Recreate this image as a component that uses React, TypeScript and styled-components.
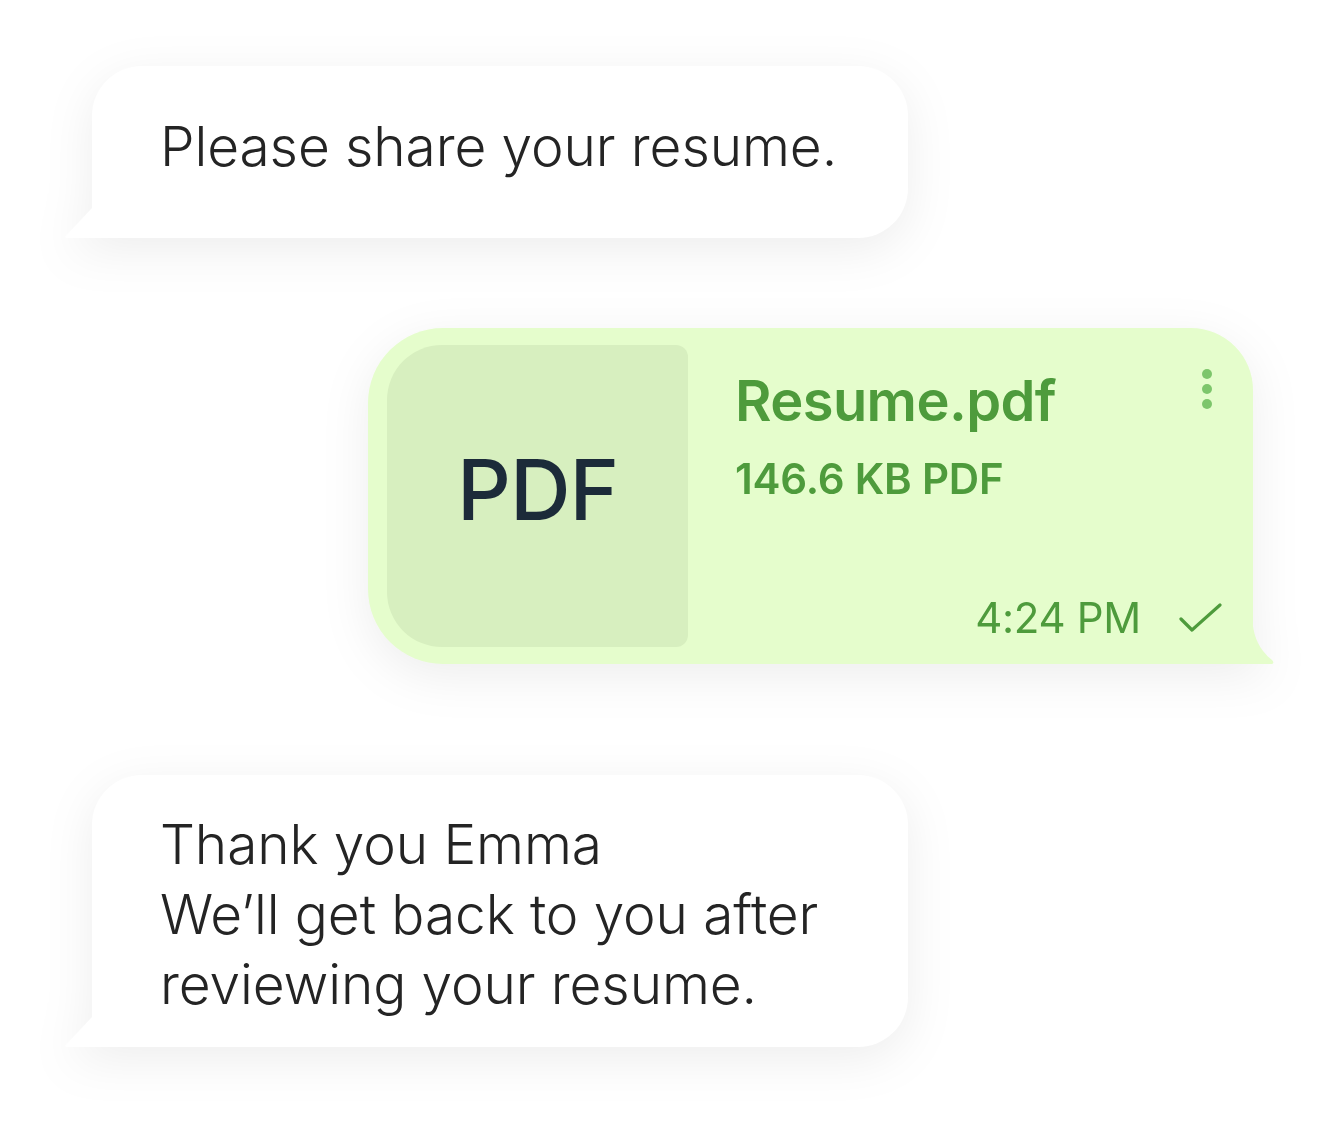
import React from "react";
import styled, { createGlobalStyle } from "styled-components";

const GlobalStyle = createGlobalStyle`
  html, body {
    margin: 0;
    padding: 0;
    background: #ffffff;
  }
  body {
    font-family: Inter, "Noto Sans", sans-serif;
  }
`;

const Page = styled.div`
  width: 1341px;
  height: 1134px;
  box-sizing: border-box;
  padding: 66px 88px 0 92px;
  display: flex;
  flex-direction: column;
`;

const Bubble = styled.div<{ $height: number; $nudge: number }>`
  position: relative;
  box-sizing: border-box;
  width: 816px;
  height: ${(p) => p.$height}px;
  padding: ${(p) => (p.$nudge > 0 ? `${p.$nudge}px 30px 0 68px` : `0 30px ${-p.$nudge}px 68px`)};
  display: flex;
  align-items: center;
  background: #ffffff;
  border-radius: 50px 50px 50px 0;
  filter: drop-shadow(0 12px 24px rgba(0, 0, 0, 0.07));

  &::before {
    content: "";
    position: absolute;
    left: -27px;
    bottom: 0;
    width: 28px;
    height: 31px;
    background: #ffffff;
    clip-path: polygon(100% 0, 100% 100%, 2px 100%, 0 97%);
  }
`;

const MessageText = styled.p`
  margin: 0;
  font-size: 55px;
  font-weight: 300;
  line-height: 70px;
  color: #242424;
  letter-spacing: -0.1px;
`;

const SentBubble = styled.div`
  position: relative;
  align-self: flex-end;
  margin: 90px 0 111px;
  box-sizing: border-box;
  width: 885px;
  height: 336px;
  padding: 17px 0 17px 19px;
  display: flex;
  background: #e5fdcc;
  border-radius: 75px 62px 0 75px;
  filter: drop-shadow(0 12px 24px rgba(0, 0, 0, 0.07));

  &::after {
    content: "";
    position: absolute;
    right: -21px;
    bottom: 0;
    width: 22px;
    height: 48px;
    background: #e5fdcc;
    clip-path: path("M0 0 C 1 22, 8 34, 20 44 C 22 46, 22 48, 19 48 L 0 48 Z");
  }
`;

const FileThumb = styled.div`
  width: 301px;
  height: 302px;
  flex-shrink: 0;
  display: flex;
  align-items: center;
  justify-content: center;
  padding-bottom: 14px;
  box-sizing: border-box;
  background: #d7efbf;
  border-radius: 55px 12px 12px 55px;
  font-size: 84px;
  font-weight: 500;
  color: #1c2b39;
  letter-spacing: -1px;
`;

const FileInfo = styled.div`
  flex: 1;
  position: relative;
  display: flex;
  flex-direction: column;
  padding: 21px 0 0 47px;
  color: #4e9b3c;
`;

const FileName = styled.div`
  font-size: 56px;
  font-weight: 600;
  line-height: 70px;
  letter-spacing: -0.6px;
`;

const FileMeta = styled.div`
  margin-top: 17px;
  font-size: 42px;
  font-weight: 600;
  line-height: 52px;
  letter-spacing: -0.2px;
`;

const Footer = styled.div`
  margin-top: auto;
  margin-bottom: 4px;
  padding-right: 30px;
  display: flex;
  align-items: center;
  justify-content: flex-end;
  gap: 38px;
`;

const Time = styled.span`
  font-size: 42px;
  font-weight: 400;
  line-height: 50px;
  letter-spacing: -0.3px;
`;

const MenuDots = styled.div`
  position: absolute;
  top: 24px;
  right: 41px;
  display: flex;
  flex-direction: column;
  gap: 5px;

  span {
    width: 10px;
    height: 10px;
    border-radius: 50%;
    background: #7dc66b;
  }
`;

const CheckIcon = () => (
  <svg width="44" height="32" viewBox="0 0 44 32" fill="none">
    <path
      d="M2 17 L13 28 L41 3"
      stroke="#4e9b3c"
      strokeWidth="3.2"
      strokeLinecap="round"
      strokeLinejoin="round"
    />
  </svg>
);

const App = () => {
  return (
    <>
      <GlobalStyle />
      <Page>
        <Bubble $height={172} $nudge={-12}>
          <MessageText>Please share your resume.</MessageText>
        </Bubble>

        <SentBubble>
          <FileThumb>PDF</FileThumb>
          <FileInfo>
            <FileName>Resume.pdf</FileName>
            <FileMeta>146.6 KB PDF</FileMeta>
            <MenuDots>
              <span />
              <span />
              <span />
            </MenuDots>
            <Footer>
              <Time>4:24 PM</Time>
              <CheckIcon />
            </Footer>
          </FileInfo>
        </SentBubble>

        <Bubble $height={272} $nudge={6}>
          <MessageText>
            Thank you Emma
            <br />
            We’ll get back to you after
            <br />
            reviewing your resume.
          </MessageText>
        </Bubble>
      </Page>
    </>
  );
};

export default App;
